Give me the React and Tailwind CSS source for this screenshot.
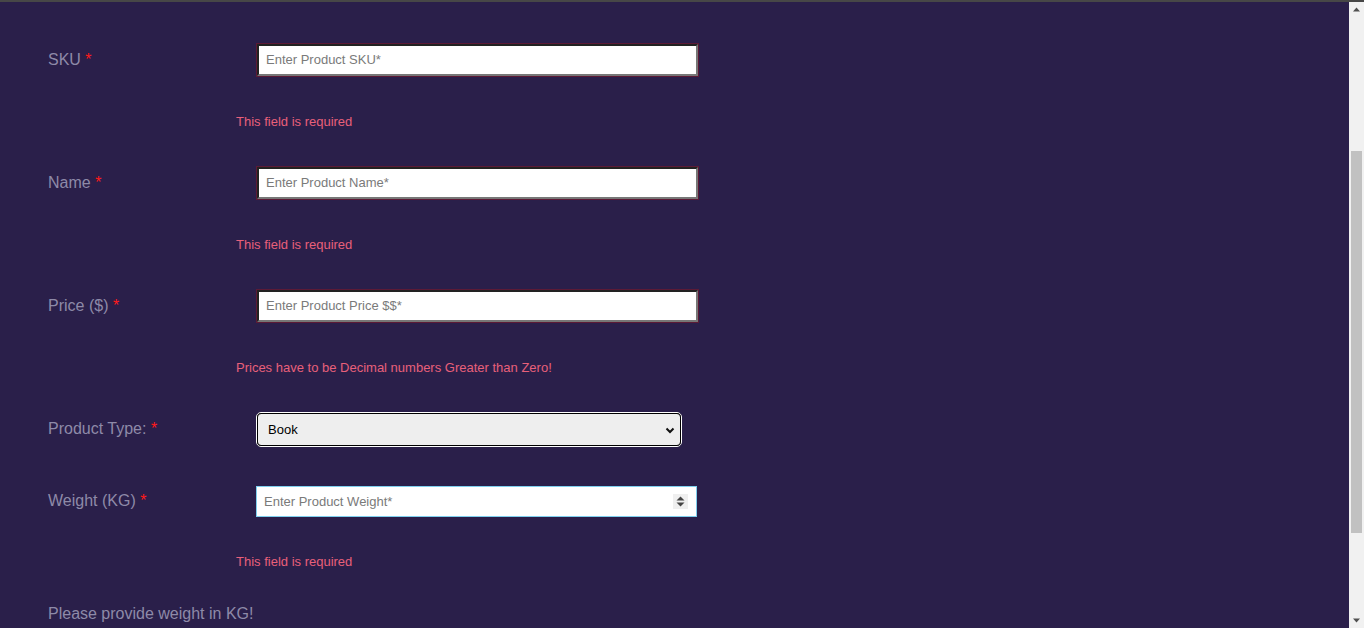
import React from "react";

const font = { fontFamily: '"Liberation Sans", Arial, sans-serif' };

function Label({ text, className = "" }) {
  return (
    <div className={"w-[256px] shrink-0 pl-12 text-[16px] leading-[18px] text-[#8e8aa8] " + className}>
      {text} <span className="text-[#ff1a1a]">*</span>
    </div>
  );
}

function TextRow({ label, placeholder, error }) {
  return (
    <div>
      <div className="flex items-start">
        <Label text={label} className="mt-[8px]" />
        <div className="w-[443px] h-[34px] border border-[#5c1a36] bg-white">
          <div className="h-full w-full border-2 border-t-[#222] border-l-[#222] border-b-[#777] border-r-[#777] flex items-center pl-[7px] text-[13px] text-[#7a7a7a]">
            {placeholder}
          </div>
        </div>
      </div>
      <div className="mt-[37px] mb-[37px] pl-[236px] text-[13px] leading-[15px] text-[#e8607a]">{error}</div>
    </div>
  );
}

export default function App() {
  return (
    <div style={font} className="w-[1364px] h-[628px] overflow-hidden bg-[#2a1f4a] flex flex-col">
      <div className="h-[2px] bg-[#474747] shrink-0" />
      <div className="flex flex-1 min-h-0">
        <div className="flex-1 pt-[41px]">
          <TextRow label="SKU" placeholder="Enter Product SKU*" error="This field is required" />
          <TextRow label="Name" placeholder="Enter Product Name*" error="This field is required" />
          <TextRow label="Price ($)" placeholder="Enter Product Price $$*" error="Prices have to be Decimal numbers Greater than Zero!" />
          <div className="flex items-start">
            <Label text="Product Type:" className="mt-[8px]" />
            <div className="w-[426px] h-[35px] rounded-[5px] border border-white bg-[#111]">
              <div className="h-full w-full rounded-[4px] border border-black bg-[#eeeeee] flex items-center justify-between pl-[10px] pr-[4px] text-[13px] text-black">
                <span>Book</span>
                <svg width="12" height="12" viewBox="0 0 12 12">
                  <path d="M2.5 4.5 L6 8 L9.5 4.5" fill="none" stroke="#111" strokeWidth="2" />
                </svg>
              </div>
            </div>
          </div>
          <div className="flex items-start mt-[39px]">
            <Label text="Weight (KG)" className="mt-[6px]" />
            <div className="w-[441px] h-[31px] border border-[#7fcfee] bg-white flex items-center pl-[7px] pr-[8px] text-[13px] text-[#7a7a7a]">
              <span className="flex-1">Enter Product Weight*</span>
              <span className="w-[15px] h-[15px] bg-[#efefef] flex items-center justify-center">
                <svg width="9" height="11" viewBox="0 0 9 11">
                  <path d="M4.5 0.5 L8.5 4.5 H0.5 Z" fill="#444" />
                  <path d="M4.5 10.5 L8.5 6.5 H0.5 Z" fill="#444" />
                </svg>
              </span>
            </div>
          </div>
          <div className="mt-[37px] pl-[236px] text-[13px] leading-[15px] text-[#e8607a]">This field is required</div>
          <div className="mt-[36px] pl-12 text-[16px] leading-[18px] text-[#8e8aa8]">Please provide weight in KG!</div>
        </div>
        <div className="w-[15px] shrink-0 bg-[#f1f1f1] flex flex-col items-center">
          <svg width="15" height="15" viewBox="0 0 15 15" className="shrink-0">
            <path d="M4 9.5 L7.5 5.5 L11 9.5 Z" fill="#505050" />
          </svg>
          <div className="h-[134px] shrink-0" />
          <div className="w-[11px] h-[382px] bg-[#c1c1c1] shrink-0" />
          <div className="flex-1" />
          <svg width="15" height="15" viewBox="0 0 15 15" className="shrink-0">
            <path d="M4 5.5 L7.5 9.5 L11 5.5 Z" fill="#505050" />
          </svg>
        </div>
      </div>
    </div>
  );
}
